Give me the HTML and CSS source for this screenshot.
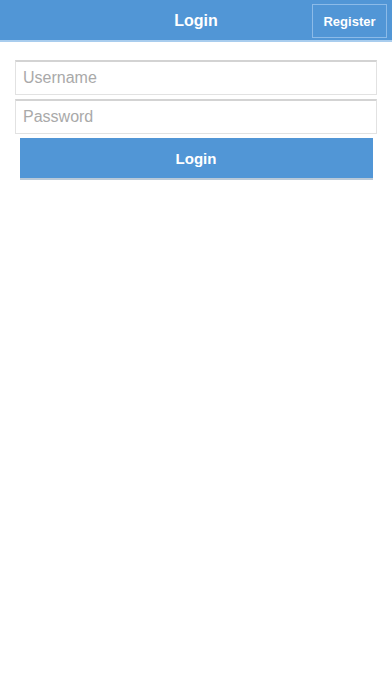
FILE: index.html
```html
<!DOCTYPE html>
<html>
<head>
<meta charset="utf-8">
<link rel="stylesheet" href="styles.css">
</head>
<body>
<header class="bar">
  <div class="title">Login</div>
  <button class="register">Register</button>
</header>
<main class="form">
  <input class="field" type="text" placeholder="Username">
  <input class="field" type="password" placeholder="Password">
  <button class="login">Login</button>
</main>
</body>
</html>
```
FILE: styles.css
```css
html, body {
  margin: 0;
  padding: 0;
  background: #ffffff;
  font-family: "Liberation Sans", Arial, sans-serif;
}
.bar {
  position: relative;
  box-sizing: border-box;
  height: 42px;
  padding-top: 2px;
  background: #5196d6;
  border-bottom: 2px solid #a9cdee;
  display: flex;
  align-items: center;
  justify-content: center;
}
.title {
  color: #fff;
  font-weight: bold;
  font-size: 16px;
}
.register {
  position: absolute;
  right: 5px;
  top: 4px;
  width: 75px;
  height: 34px;
  background: #5196d6;
  border: 1px solid #8cbbe8;
  color: #fff;
  font-family: inherit;
  font-weight: bold;
  font-size: 13px;
  padding: 0;
}
.form {
  display: flex;
  flex-direction: column;
  align-items: center;
  padding-top: 18px;
}
.field {
  box-sizing: border-box;
  width: 362px;
  height: 35px;
  margin: 0 0 4px 0;
  border: 1px solid #e2e2e2;
  border-top: 2px solid #d3d3d3;
  padding: 0 7px;
  font-family: inherit;
  font-size: 16px;
  color: #333;
  outline: none;
}
.field::placeholder {
  color: #a9a9a9;
}
.login {
  box-sizing: border-box;
  width: 353px;
  height: 42px;
  margin-top: 0;
  background: #5196d6;
  border: none;
  border-bottom: 2px solid #b9c9d8;
  color: #fff;
  font-family: inherit;
  font-weight: bold;
  font-size: 15px;
}
```
